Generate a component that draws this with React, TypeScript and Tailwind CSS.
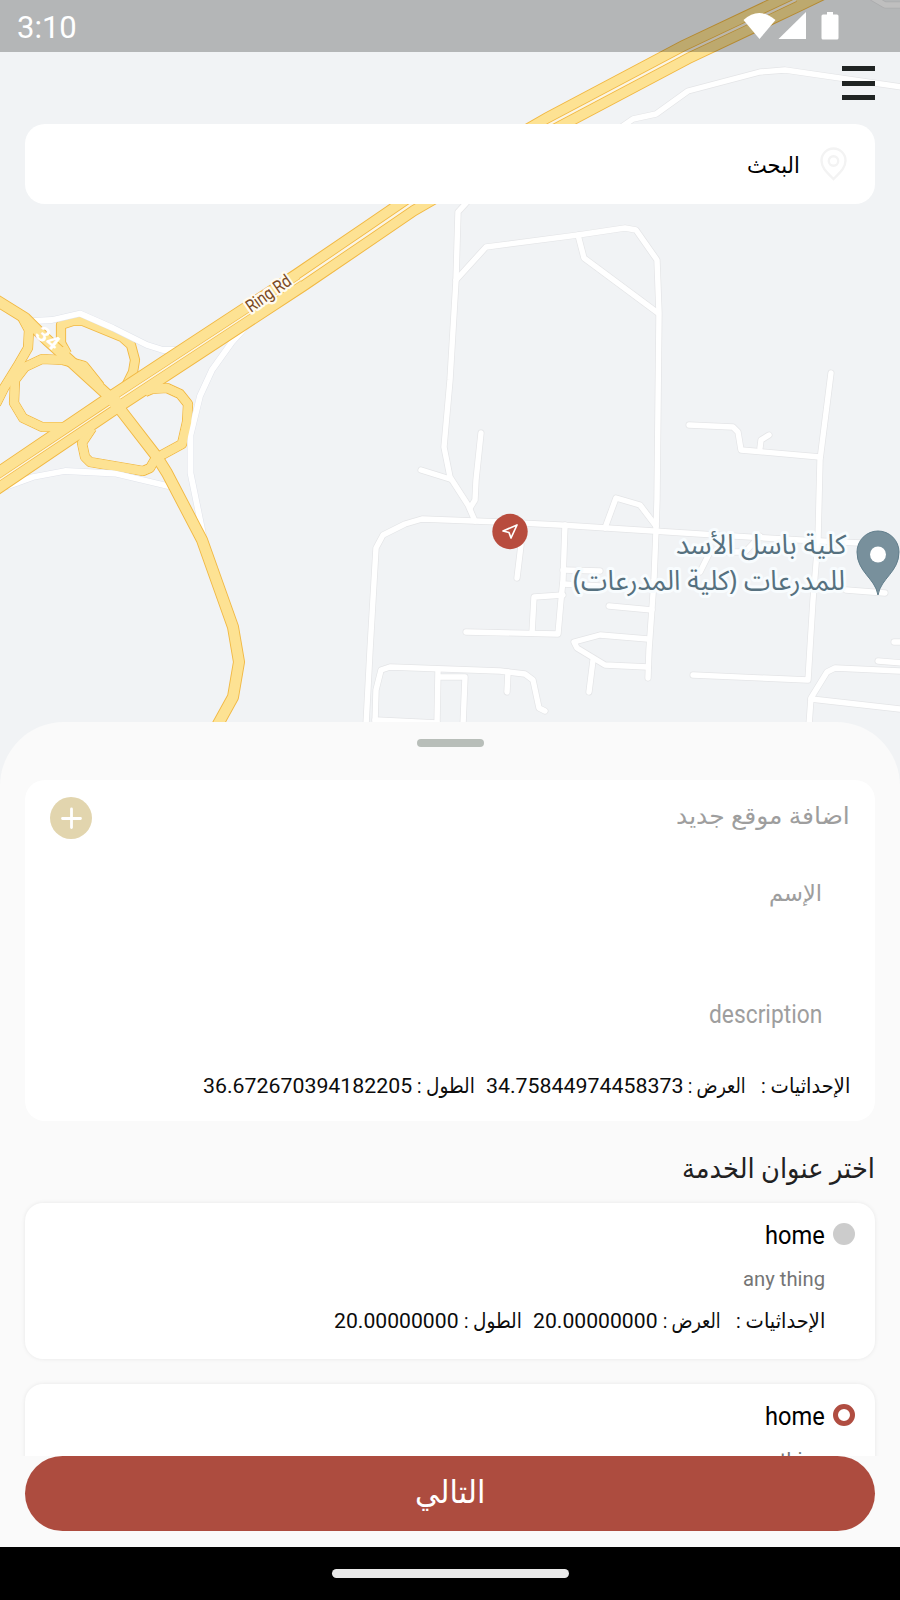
import { useLayoutEffect, useRef, useState } from "react";
import type { ReactNode } from "react";

const SERVICE_ROADS = [
  "M33 321L52 320L80 313.500L113 328L147 345L163 350L180 350",
  "M252 320L232 342L212 370L200 396L190.500 435L190.500 473L203 534",
  "M8 486L33 477L65 471L115 473.500L172 487",
];

const STREETS = [
  "M468 201L458 212L456 280L450 380L444 447L450 477L468 505L475 521",
  "M456 280L486 247L578 235L625 228L636 230L657 260L659 313L657 500L656 530L654 580L649 650L648 678",
  "M578 235L584 258L658 313",
  "M421 470L450 479",
  "M481 433L476 480L475 500L470 508",
  "M366 725L370 650L376 548L383 535L405 524L422 519L500 522L560 525L700 534L800 540L860 543",
  "M521 545L517 578",
  "M565 525L563 580L561 600L558 634L466 632",
  "M563 595L534 597L532 633",
  "M563 570L600 571",
  "M563 584L600 586",
  "M605 528L616 498L640 505L656 526",
  "M609 606L652 610",
  "M648 639L600 635L574 642L577 648L605 665L648 667",
  "M593 660L589 692",
  "M375 723L376 690L381 670L390 667L500 671L525 674L533 680L539 708L545 711",
  "M375 720L437 723",
  "M438 670L437 725",
  "M440 677L465 677L463 725",
  "M508 672L507 692",
  "M831 373L820 460L818 540L813 600L808 680L693 675",
  "M689 425L733 427L738 432L741 450L820 457",
  "M760 448L761 440L769 435",
  "M700 572L710 552L745 552L760 536",
  "M846 590L885 593",
  "M809 725L811 698L827 672L835 668L900 671",
  "M811 699L900 709",
  "M894 642L902 642",
  "M878 661L902 663",
  "M620 128L633 119L656 114L688 91L760 72L785 70L902 87",
  "M873 -2L885 5L902 5",
];

const RAMPS = [
  "M67 354L61 343L61 325L73 321L83 321L122 337L131 345L135 360L133 372L122 394",
  "M100 386L84 366L63 360L42 359L25 367L15 380L14 403L23 418L42 427L72 427",
  "M22 317L29 330L28 348L17 367L4 388L-4 404",
  "M145 392L152 389L167 388L180 394L188 404L187 422L182 444L160 456",
  "M92 428L82 443L85 457L90 462L143 471L150 468L157 456",
];

const CROSS_ROAD =
  "M-4 300L25 318L47 340L67 358L112 399L123 413L157 457L167 473L202 540L233 627L239 662L233 697L217 726";
const RING_ROAD = "M-10 486L114 402L300 280L372 231L410 205L550 124L686 52L796 0L860 -31";

function Roads({ paths, casing, fill, outer, inner }: {
  paths: string[];
  casing: string;
  fill: string;
  outer: number;
  inner: number;
}) {
  return (
    <g fill="none" strokeLinejoin="round">
      {paths.map((d) => (
        <path key={"c" + d} d={d} stroke={casing} strokeWidth={outer} />
      ))}
      {paths.map((d) => (
        <path key={"f" + d} d={d} stroke={fill} strokeWidth={inner} />
      ))}
    </g>
  );
}

function MapCanvas() {
  return (
    <svg className="absolute inset-0" width="900" height="800" viewBox="0 0 900 800">
      <rect width="900" height="800" fill="#f1f3f5" />
      <g strokeLinecap="round">
        <Roads paths={STREETS} casing="#e4e5e7" fill="#ffffff" outer={6.8} inner={5.4} />
      </g>
      <Roads paths={RAMPS} casing="#f1b843" fill="#fde293" outer={10.2} inner={8.4} />
      <g strokeLinecap="round">
        <Roads paths={SERVICE_ROADS} casing="#e0e3ea" fill="#ffffff" outer={6.8} inner={5.8} />
      </g>
      <g fill="none" strokeLinejoin="round">
        <g stroke="#f1b843">
          <path d={CROSS_ROAD} strokeWidth="12" />
          <path d={RING_ROAD} strokeWidth="25" />
        </g>
        <g stroke="#fde293">
          <path d={RAMPS[0]} strokeWidth="8.4" strokeDasharray="8 215 30" />
          <path d={RAMPS[1]} strokeWidth="8.4" />
          <path d={RAMPS[2]} strokeWidth="8.4" />
          <path d={RAMPS[3]} strokeWidth="8.4" />
          <path d={RAMPS[4]} strokeWidth="8.4" />
          <path d={RING_ROAD} strokeWidth="23" />
          <path d={CROSS_ROAD} strokeWidth="10.2" />
        </g>
        <path d="M-10 486L110 406M120 398L300 280" stroke="#f1b843" strokeWidth="2.8" />
        <path d="M-10 486L110 406M120 398L300 280" stroke="#fdf6e0" strokeWidth="1.5" />
        <path d="M300 280L372 231L410 205L550 124L686 52L796 0" stroke="#f1b843" strokeWidth="4" />
        <path d="M300 280L372 231L410 205L550 124L686 52L796 0" stroke="#fbf5e4" strokeWidth="2.4" />
      </g>
      <text
        transform="translate(251 313) rotate(-35)"
        direction="ltr"
        fontFamily="Roboto, sans-serif"
        fontSize="17.500"
        textLength="51"
        lengthAdjust="spacingAndGlyphs"
        fill="#7a4a24"
        stroke="#fffaf0"
        strokeWidth="5"
        strokeLinejoin="round"
        paintOrder="stroke"
      >
        Ring Rd
      </text>
      <text
        transform="translate(34 336) rotate(38)"
        direction="ltr"
        fontFamily="Roboto, sans-serif"
        fontSize="20"
        fontWeight="700"
        textLength="25"
        lengthAdjust="spacingAndGlyphs"
        fill="#ffffff"
      >
        34
      </text>
      <g
        fontFamily="'Noto Sans Arabic', 'DejaVu Sans', sans-serif"
        fontSize="27.500"
        fill="#56717f"
        stroke="#f8fcfe"
        strokeWidth="6"
        strokeLinejoin="round"
        paintOrder="stroke"
        direction="rtl"
      >
        <text x="846" y="554" textLength="170" lengthAdjust="spacingAndGlyphs">كلية باسل الأسد</text>
        <text x="845" y="590" textLength="272" lengthAdjust="spacingAndGlyphs">للمدرعات (كلية المدرعات)</text>
      </g>
      <path
        d="M878 595C875 578 857 572 857 552A21 21 0 0 1 899 552C899 572 881 578 878 595Z"
        fill="#78909c"
        stroke="#607d8b"
        strokeWidth="1"
      />
      <circle cx="878" cy="554.500" r="8" fill="#fff" />
      <circle cx="510" cy="531.500" r="17.700" fill="#b84c3e" />
      <path d="M503 531L517 525L511 538L509 532.500Z" fill="none" stroke="#fff" strokeWidth="1.700" strokeLinejoin="round" />
    </svg>
  );
}

/* Sets a run of text to a fixed measure by condensing or widening its glyphs. */
function Fit({ width, className = "", children }: { width: number; className?: string; children: ReactNode }) {
  const inner = useRef<HTMLSpanElement>(null);
  const [ratio, setRatio] = useState(1);
  useLayoutEffect(() => {
    if (inner.current) setRatio(width / inner.current.offsetWidth);
  }, [width]);
  return (
    <span className={"flex shrink-0 justify-start leading-none " + className} style={{ width }}>
      <span
        ref={inner}
        className="inline-block shrink-0 origin-right whitespace-pre"
        style={{ transform: `scaleX(${ratio})` }}
      >
        {children}
      </span>
    </span>
  );
}

function Coordinates({ lat, lng, width1, width2 }: { lat: string; lng: string; width1: number; width2: number }) {
  return (
    <div className="flex h-7 items-center text-[21px] text-[#0c0c0c]">
      <Fit width={89}>الإحداثيات :</Fit>
      <Fit width={58} className="ms-[15px]">العرض :</Fit>
      <Fit width={width1} className="ms-[5px]">{lat}</Fit>
      <Fit width={58} className="ms-[11px]">الطول :</Fit>
      <Fit width={width2} className="ms-[5px]">{lng}</Fit>
    </div>
  );
}

function AddressCard({ selected, children }: { selected: boolean; children?: ReactNode }) {
  return (
    <article className="h-[156px] shrink-0 rounded-[18px] bg-white pt-[20px] pr-[20px] shadow-[0_0_4px_rgba(0,0,0,0.08)]">
      <div className="flex h-[22px] items-center gap-[8px]">
        <span
          className={
            selected
              ? "size-[22px] rounded-full border-[5px] border-[#b04d41]"
              : "size-[22px] rounded-full bg-[#cccccc]"
          }
        />
        <Fit width={60} className="pt-[2px] text-[26px] text-black">home</Fit>
      </div>
      <div className="mt-[20px] flex h-7 items-center pr-[30px] text-[20px] text-[#757575]">
        <Fit width={82}>any thing</Fit>
      </div>
      <div className="mt-[14px] pr-[30px]">{children}</div>
    </article>
  );
}

export default function App() {
  return (
    <div
      dir="rtl"
      className="relative flex h-[1600px] w-[900px] flex-col overflow-hidden bg-[#f1f3f5] font-['Roboto','DejaVu_Sans',sans-serif]"
    >
      <MapCanvas />

      <header dir="ltr" className="relative flex h-[52px] shrink-0 items-center justify-between bg-black/25 pr-[61px] pl-[17px] text-white">
        <span className="pt-[3px] text-[31px] leading-none">3:10</span>
        <svg width="96" height="30" viewBox="0 0 96 30" fill="#fff">
          <path d="M.5 9Q16-5 32.500 9L16.500 28Z" />
          <path d="M35.500 28V28L63 1V28Z" />
          <path d="M84 1h6v2.500h4q1.500 0 1.500 1.500v22q0 1.500-1.500 1.500H80q-1.500 0-1.500-1.500V5q0-1.500 1.500-1.500h4Z" />
        </svg>
      </header>

      <div className="relative flex h-[72px] shrink-0 items-start pt-[14px] pr-[25px]">
        <button className="flex w-[33px] flex-col gap-[9.500px]">
          <span className="h-[5px] w-full bg-[#202423]" />
          <span className="h-[5px] w-full bg-[#202423]" />
          <span className="h-[5px] w-full bg-[#202423]" />
        </button>
      </div>

      <div className="relative mx-[25px] flex h-[80px] shrink-0 items-center rounded-[20px] bg-white pr-[28px]">
        <svg width="27" height="34" viewBox="0 0 27 34" fill="none" stroke="#f3f3f3" strokeWidth="2.400">
          <path d="M13.500 32C9 27 1.500 22 1.500 13.500a12 12 0 0 1 24 0C25.500 22 18 27 13.500 32Z" />
          <circle cx="13.500" cy="14" r="4.700" />
        </svg>
        <Fit width={53} className="ms-[20px] pt-[3px] text-[23px] text-black">البحث</Fit>
      </div>

      <main className="relative mt-[518px] flex h-[825px] shrink-0 flex-col overflow-hidden rounded-t-[64px] bg-[#fafafa] px-[25px]">
        <div className="mt-[17px] h-[8px] w-[67px] shrink-0 self-center rounded-full bg-[#b8beb9]" />

        <section className="mt-[33px] h-[341px] shrink-0 rounded-[20px] bg-white pr-[25px] pl-[25px]">
          <div className="flex h-[75px] items-center justify-between">
            <Fit width={174} className="-mt-[3px] text-[24px] text-[#9e9e9e]">اضافة موقع جديد</Fit>
            <button className="flex size-[42px] items-center justify-center rounded-full bg-[#e2d5ae]">
              <svg width="22" height="22" viewBox="0 0 22 22" stroke="#fff" strokeWidth="2.800" strokeLinecap="round">
                <path d="M11.500 2V20.500M2.500 11.500H20.500" />
              </svg>
            </button>
          </div>
          <div className="mt-[24px] flex h-7 items-center pr-[28px]">
            <Fit width={53} className="text-[23px] text-[#9e9e9e]">الإسم</Fit>
          </div>
          <div className="mt-[93px] flex h-7 items-center pr-[28px]">
            <Fit width={113} className="text-[25px] text-[#9e9e9e]">description</Fit>
          </div>
          <div className="mt-[44px]">
            <Coordinates lat="34.75844974458373" lng="36.672670394182205" width1={197} width2={209} />
          </div>
        </section>

        <h2 className="mt-[30px] flex h-[36px] shrink-0 items-center text-[28px] text-[#212121]">
          <Fit width={193}>اختر عنوان الخدمة</Fit>
        </h2>

        <div className="-mx-1 mt-[12px] flex h-[257px] shrink-0 flex-col gap-[25px] overflow-hidden px-1 pt-[4px]">
          <AddressCard selected={false}>
            <Coordinates lat="20.00000000" lng="20.00000000" width1={125} width2={125} />
          </AddressCard>
          <AddressCard selected />
        </div>

        <button className="flex h-[75px] shrink-0 items-center justify-center rounded-full bg-[#ad4c3f] pb-[3px] text-[32px] text-white">
          <Fit width={70}>التالي</Fit>
        </button>
      </main>

      <footer className="relative flex h-[53px] shrink-0 items-start justify-center bg-black pt-[22px]">
        <div className="h-[9px] w-[237px] rounded-full bg-[#e9e9e9]" />
      </footer>
    </div>
  );
}
